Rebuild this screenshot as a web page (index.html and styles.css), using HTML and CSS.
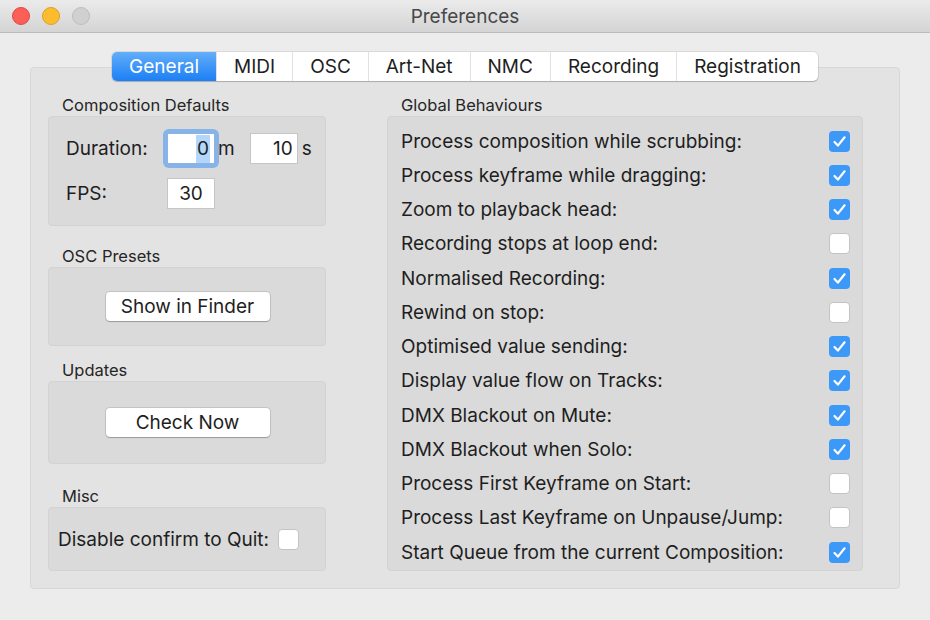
FILE: index.html
```html
<!DOCTYPE html>
<html lang="en">
<head>
    <meta charset="UTF-8">
    <meta name="viewport" content="width=device-width, initial-scale=1.0">
    <title>Preferences</title>
    <link rel="stylesheet" href="styles.css">
</head>
<body>

<div class="titlebar">
    <div class="lights">
        <span class="light close"></span>
        <span class="light minimize"></span>
        <span class="light zoom"></span>
    </div>
    <div class="title">Preferences</div>
    <div></div>
</div>

<div class="content">
    <div class="tabs">
        <div class="tab-strip">
            <div class="tab active">General</div>
            <div class="tab">MIDI</div>
            <div class="tab">OSC</div>
            <div class="tab">Art-Net</div>
            <div class="tab">NMC</div>
            <div class="tab">Recording</div>
            <div class="tab">Registration</div>
        </div>
    </div>

    <div class="tabview">
        <div class="col-left">
            <div class="group">
                <div class="group-title">Composition Defaults</div>
                <div class="box box-composition">
                    <div class="field-row">
                        <span class="field-label">Duration:</span>
                        <span class="focus-ring"><span class="field align-right"><span class="selected">0</span></span></span>
                        <span class="unit unit-m">m</span>
                        <span class="field align-right field-seconds">10</span>
                        <span class="unit">s</span>
                    </div>
                    <div class="field-row fps-row">
                        <span class="field-label">FPS:</span>
                        <span class="field align-center">30</span>
                    </div>
                </div>
            </div>

            <div class="group group-osc">
                <div class="group-title">OSC Presets</div>
                <div class="box box-button box-osc">
                    <button>Show in Finder</button>
                </div>
            </div>

            <div class="group group-updates">
                <div class="group-title">Updates</div>
                <div class="box box-button box-updates">
                    <button>Check Now</button>
                </div>
            </div>

            <div class="group group-misc">
                <div class="group-title">Misc</div>
                <div class="box box-misc">
                    <span>Disable confirm to Quit:</span>
                    <span class="checkbox"></span>
                </div>
            </div>
        </div>

        <div class="col-right">
            <div class="group-title">Global Behaviours</div>
            <div class="box box-global">
                <div class="option"><span>Process composition while scrubbing:</span><span class="checkbox checked"></span></div>
                <div class="option"><span>Process keyframe while dragging:</span><span class="checkbox checked"></span></div>
                <div class="option"><span>Zoom to playback head:</span><span class="checkbox checked"></span></div>
                <div class="option"><span>Recording stops at loop end:</span><span class="checkbox"></span></div>
                <div class="option"><span>Normalised Recording:</span><span class="checkbox checked"></span></div>
                <div class="option"><span>Rewind on stop:</span><span class="checkbox"></span></div>
                <div class="option"><span>Optimised value sending:</span><span class="checkbox checked"></span></div>
                <div class="option"><span>Display value flow on Tracks:</span><span class="checkbox checked"></span></div>
                <div class="option"><span>DMX Blackout on Mute:</span><span class="checkbox checked"></span></div>
                <div class="option"><span>DMX Blackout when Solo:</span><span class="checkbox checked"></span></div>
                <div class="option"><span>Process First Keyframe on Start:</span><span class="checkbox"></span></div>
                <div class="option"><span>Process Last Keyframe on Unpause/Jump:</span><span class="checkbox"></span></div>
                <div class="option"><span>Start Queue from the current Composition:</span><span class="checkbox checked"></span></div>
            </div>
        </div>
    </div>
</div>

</body>
</html>
```

FILE: styles.css
```css
/* Basic Reset */
* {
    margin: 0;
    padding: 0;
    box-sizing: border-box;
}

body {
    font-family: Inter, "Liberation Sans", Arial, sans-serif;
    background-color: #ececec;
    color: #1e1e1e;
    width: 930px;
    height: 620px;
    overflow: hidden;
}

/* Title bar */
.titlebar {
    height: 33px;
    display: grid;
    grid-template-columns: 1fr auto 1fr;
    align-items: center;
    background: linear-gradient(#ebebeb, #d4d4d4);
    border-bottom: 1px solid #bcbcbc;
}

.lights {
    display: flex;
    gap: 12px;
    padding-left: 12px;
}

.light {
    width: 18px;
    height: 18px;
    border-radius: 50%;
}

.light.close {
    background-color: #fc5f57;
    border: 1px solid #e1463f;
}

.light.minimize {
    background-color: #fdbc2e;
    border: 1px solid #de9f22;
}

.light.zoom {
    background-color: #d0d0d0;
    border: 1px solid #bdbdbd;
}

.title {
    font-size: 19px;
    color: #474747;
}

/* Tabs */
.content {
    padding-top: 19px;
}

.tabs {
    display: flex;
    justify-content: center;
    position: relative;
    z-index: 1;
    margin-bottom: -14px;
}

.tab-strip {
    display: flex;
    height: 29px;
    background-color: #fff;
    border-radius: 5px;
    box-shadow: 0 0 0 1px rgba(0, 0, 0, 0.08), 0 1px 1px rgba(0, 0, 0, 0.18);
}

.tab {
    padding: 0 17px;
    line-height: 29px;
    font-size: 19px;
    border-left: 1px solid #e2e2e2;
}

.tab:first-child {
    border-left: none;
}

.tab.active {
    background: linear-gradient(#63aef9, #1b7ff5);
    color: #fff;
    border-radius: 5px 0 0 5px;
}

/* Tab body */
.tabview {
    margin: 0 30px;
    height: 522px;
    background-color: #e3e3e3;
    border: 1px solid #d7d7d7;
    border-radius: 4px;
    display: flex;
    gap: 61px;
    padding: 27px 36px 0 17px;
}

.col-left {
    width: 278px;
    display: flex;
    flex-direction: column;
}

.col-right {
    width: 476px;
}

.group-title {
    font-size: 16.5px;
    line-height: 20px;
    margin: 0 0 1px 14px;
    color: #262626;
}

.box {
    background-color: #dadada;
    border: 1px solid #d3d3d3;
    border-radius: 4px;
}

.group-osc {
    margin-top: 20px;
}

.group-updates {
    margin-top: 14px;
}

.group-misc {
    margin-top: 22px;
}

/* Composition defaults */
.box-composition {
    height: 110px;
    padding: 12px 0 0 17px;
    font-size: 19px;
}

.field-row {
    display: flex;
    align-items: center;
}

.field-label {
    width: 97px;
}

.fps-row {
    margin-top: 10px;
}

.fps-row .field-label {
    width: 101px;
}

.focus-ring {
    padding: 4px;
    border-radius: 6px;
    background-color: #86b3e8;
}

.field {
    width: 48px;
    height: 31px;
    display: flex;
    align-items: center;
    background-color: #fff;
    border: 1px solid #c6c6c6;
    font-size: 19px;
}

.focus-ring .field {
    border-color: #8bb4e4;
}

.align-right {
    justify-content: flex-end;
    padding-right: 4px;
}

.align-center {
    justify-content: center;
}

.selected {
    background-color: #b3d6fd;
    line-height: 28px;
    padding: 0 1px;
}

.unit {
    margin-left: 4px;
}

.unit-m {
    margin-left: -1px;
}

.field-seconds {
    margin-left: 15px;
}

/* Buttons */
.box-button {
    display: flex;
    align-items: center;
    justify-content: center;
}

.box-osc {
    height: 79px;
}

.box-updates {
    height: 83px;
}

button {
    width: 164px;
    height: 29px;
    font-family: inherit;
    font-size: 19px;
    color: #1e1e1e;
    background-color: #fff;
    border: none;
    border-radius: 4px;
    box-shadow: 0 0 0 1px rgba(0, 0, 0, 0.1), 0 1px 1px rgba(0, 0, 0, 0.22);
    margin-left: 1px;
}

/* Misc */
.box-misc {
    height: 64px;
    display: flex;
    align-items: center;
    gap: 9px;
    padding-left: 9px;
    font-size: 19px;
}

/* Checkboxes */
.checkbox {
    width: 21px;
    height: 21px;
    border-radius: 4px;
    background-color: #fff;
    border: 1px solid #c4c4c4;
    flex-shrink: 0;
}

.checkbox.checked {
    border: none;
    background: #3d99f8 url("data:image/svg+xml,%3Csvg xmlns='http://www.w3.org/2000/svg' width='21' height='21' viewBox='0 0 21 21'%3E%3Cpath d='M5.5 11l3.4 3.6L15.6 6.3' fill='none' stroke='white' stroke-width='2.2' stroke-linecap='round' stroke-linejoin='round'/%3E%3C/svg%3E") center no-repeat;
}

/* Global behaviours */
.box-global {
    height: 455px;
    padding: 7px 12px 0 13px;
}

.option {
    height: 34.25px;
    display: flex;
    align-items: center;
    justify-content: space-between;
    font-size: 19px;
}
```
